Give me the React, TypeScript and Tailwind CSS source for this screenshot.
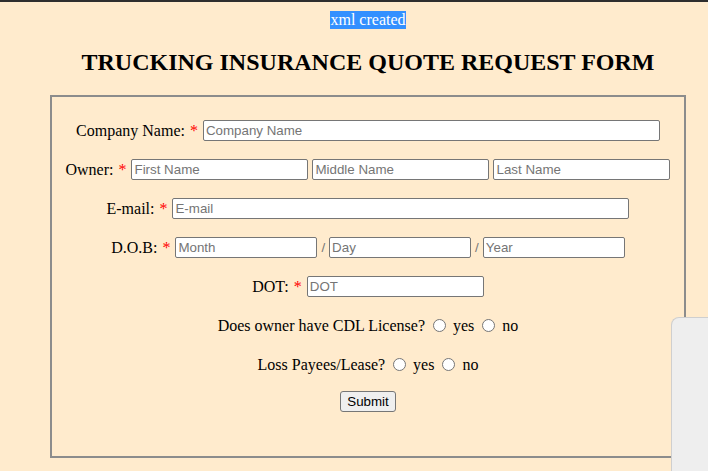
import React from "react"

const serif = "font-['Liberation_Serif','Times_New_Roman',serif]"
const sans = "font-['Liberation_Sans',Arial,sans-serif]"

function Field({ placeholder, width }: { placeholder: string; width: string }) {
  return (
    <input
      placeholder={placeholder}
      className={`${sans} ${width} h-[21px] rounded-[2px] border border-[#767676] bg-white px-[2px] text-[13.33px] text-black placeholder:text-[#757575]`}
    />
  )
}

function Star() {
  return <span className="mx-[5px] text-[#ff0000]">*</span>
}

function Radio({ label }: { label: string }) {
  return (
    <span className="flex items-center">
      <span className="ml-[8px] mr-[7px] h-[13px] w-[13px] rounded-full border border-[#767676] bg-white" />
      <span>{label}</span>
    </span>
  )
}

function Row({ children }: { children: React.ReactNode }) {
  return <div className="flex h-[23px] items-center justify-center">{children}</div>
}

export default function App() {
  return (
    <div className={`relative min-h-[471px] overflow-hidden bg-[#ffebcd] text-[16px] text-black ${serif}`}>
      <div className="h-[2px] bg-[#2e2e2e]" />
      <div className="pl-[28px]">
        <div className="mt-[9px] flex justify-center leading-[18px]">
          <span className="bg-[#3390ff] text-white">xml created</span>
        </div>
        <h2 className="mt-[20px] text-center text-[24px] font-bold leading-[27px]">
          TRUCKING INSURANCE QUOTE REQUEST FORM
        </h2>
        <fieldset className="mx-[22px] mt-[19px] h-[363px] border-2 border-[#8c8c8c] pt-[22px]">
          <div className="flex flex-col gap-[16px]">
            <Row>
              <span>Company Name:</span>
              <Star />
              <Field placeholder="Company Name" width="w-[457px]" />
            </Row>
            <Row>
              <span>Owner:</span>
              <Star />
              <div className="flex gap-[4px]">
                <Field placeholder="First Name" width="w-[177px]" />
                <Field placeholder="Middle Name" width="w-[177px]" />
                <Field placeholder="Last Name" width="w-[177px]" />
              </div>
            </Row>
            <Row>
              <span>E-mail:</span>
              <Star />
              <Field placeholder="E-mail" width="w-[457px]" />
            </Row>
            <Row>
              <span>D.O.B:</span>
              <Star />
              <Field placeholder="Month" width="w-[142px]" />
              <span className={`${sans} mx-[4px] text-[13.33px] text-[#757575]`}>/</span>
              <Field placeholder="Day" width="w-[142px]" />
              <span className={`${sans} mx-[4px] text-[13.33px] text-[#757575]`}>/</span>
              <Field placeholder="Year" width="w-[142px]" />
            </Row>
            <Row>
              <span>DOT:</span>
              <Star />
              <Field placeholder="DOT" width="w-[177px]" />
            </Row>
            <Row>
              <span>Does owner have CDL License?</span>
              <Radio label="yes" />
              <Radio label="no" />
            </Row>
            <Row>
              <span>Loss Payees/Lease?</span>
              <Radio label="yes" />
              <Radio label="no" />
            </Row>
          </div>
          <div className="mt-[15px] flex justify-center">
            <button
              className={`${sans} h-[21px] rounded-[3px] border border-[#767676] bg-[#efefef] px-[6px] text-[13.33px] text-black`}
            >
              Submit
            </button>
          </div>
        </fieldset>
      </div>
      <div className="absolute left-[671px] top-[317px] h-[160px] w-[40px] rounded-tl-[8px] border-l border-t border-[#cfcfcf] bg-[#eeeeee]" />
    </div>
  )
}
